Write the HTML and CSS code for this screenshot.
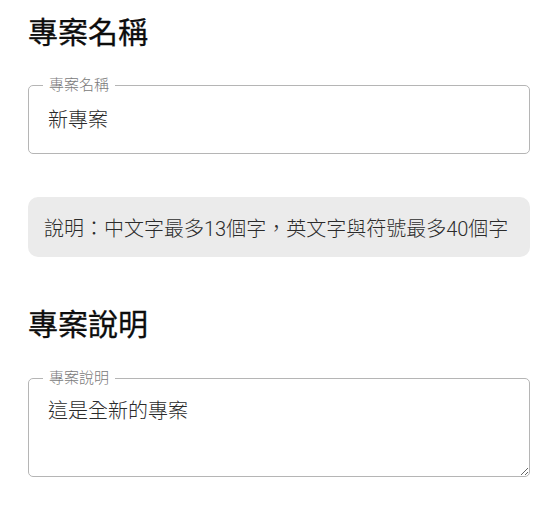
FILE: index.html
```html
<!DOCTYPE html>
<html lang="zh-Hant">
<head>
<meta charset="utf-8">
<title>專案設定</title>
<link rel="stylesheet" href="styles.css">
</head>
<body>
<main class="page">
  <h2 class="title">專案名稱</h2>
  <fieldset class="field">
    <legend class="field-label">專案名稱</legend>
    <input class="field-input" type="text" value="新專案">
  </fieldset>
  <div class="note">說明：中文字最多13個字，英文字與符號最多40個字</div>
  <h2 class="title title-second">專案說明</h2>
  <fieldset class="field field-second">
    <legend class="field-label">專案說明</legend>
    <textarea class="field-area">這是全新的專案</textarea>
  </fieldset>
</main>
</body>
</html>
```
FILE: styles.css
```css
html, body {
  margin: 0;
  padding: 0;
  background: #ffffff;
}
body {
  font-family: Roboto, "Noto Sans CJK TC", sans-serif;
  color: rgba(0, 0, 0, 0.87);
}
.page {
  display: flex;
  flex-direction: column;
  padding: 13px 23px 0 28px;
}
.title {
  margin: 0;
  font-size: 30px;
  line-height: 40px;
  font-weight: 400;
  color: #0d0d0d;
  -webkit-text-stroke: 0.3px #0d0d0d;
}
.title-second {
  margin-top: 48px;
}
.field {
  margin: 25px 0 0 0;
  padding: 0;
  border: 1px solid #b5b5b5;
  border-radius: 5px;
  min-width: 0;
}
.field-second {
  margin-top: 26px;
}
.field-label {
  margin-left: 14px;
  padding: 0 6px;
  font-size: 15px;
  line-height: 14px;
  font-weight: 300;
  color: #7a7a7a;
}
.field-input,
.field-area {
  display: block;
  width: 100%;
  box-sizing: border-box;
  margin: 0;
  border: 0;
  outline: none;
  background: transparent;
  font-family: Roboto, "Noto Sans CJK TC", sans-serif;
  font-size: 20px;
  line-height: 24px;
  font-weight: 300;
  color: #2b2b2b;
  padding: 14px 19px 0 19px;
}
.field-input {
  height: 61px;
  padding-bottom: 23px;
}
.field-area {
  height: 91px;
  resize: vertical;
}
.note {
  margin-top: 43px;
  height: 60px;
  box-sizing: border-box;
  display: flex;
  align-items: center;
  padding: 0 16px;
  background: #ebebeb;
  border-radius: 10px;
  font-size: 20px;
  font-weight: 300;
  color: #2b2b2b;
}
```
